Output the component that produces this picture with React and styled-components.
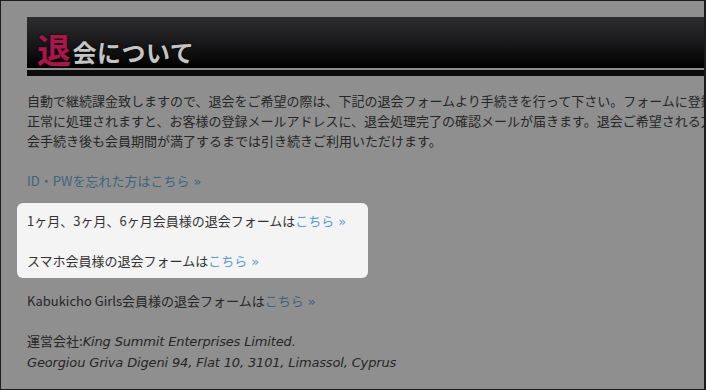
import React from "react"
import styled, { createGlobalStyle } from "styled-components"

const GlobalStyle = createGlobalStyle`
  html, body {
    margin: 0;
    padding: 0;
    overflow: hidden;
    background: #8f8f8f;
  }
`

const Frame = styled.div`
  width: 706px;
  height: 390px;
  box-sizing: border-box;
  border: 1px solid #1c1c1c;
  border-right-width: 2px;
  background: #8f8f8f;
  overflow: hidden;
  padding: 16px 0 0 26px;
  font-family: "Noto Sans CJK JP", sans-serif;
  font-size: 13px;
  line-height: 20px;
  color: #262626;
`

const Header = styled.div`
  border-bottom: 6px solid #0c0c0c;
  padding-bottom: 2px;
  background-clip: content-box;
`

const TitleBar = styled.h1`
  margin: 0;
  height: 51px;
  box-sizing: border-box;
  display: flex;
  align-items: flex-end;
  padding: 0 0 4px 10px;
  background: linear-gradient(#2e2e31, #1b1b1d 45%, #000);
  font-family: "Noto Sans CJK JP", sans-serif;
  font-weight: 700;
  line-height: 1;
  color: #c4c4c4;
  font-size: 24px;
  letter-spacing: 0.5px;
  text-shadow: 0 0 2px #000;
`

const Accent = styled.span`
  color: #a8164c;
  font-size: 34px;
  margin-right: 1px;
  margin-bottom: -2px;
`

const Body = styled.div`
  display: flex;
  flex-direction: column;
  margin-top: 15px;
`

const Para = styled.p`
  margin: 0 0 ${(p) => p.$gap ?? 20}px;
  white-space: nowrap;
`

const Link = styled.a`
  color: ${(p) => (p.$lit ? "#5d9bcd" : "#3f637d")};
  text-decoration: none;
`

const Chevron = styled.span`
  font-family: "DejaVu Sans", sans-serif;
  line-height: 0;
  margin-left: 4px;
`

const Spotlight = styled.div`
  width: 351px;
  box-sizing: border-box;
  margin: -8px 0 13px -10px;
  padding: 8px 10px 7px;
  background: #f4f4f4;
  border-radius: 6px;
  color: #333;
`

const Italic = styled.span`
  font-family: "DejaVu Sans", sans-serif;
  font-style: italic;
  letter-spacing: -0.15px;
`

const More = ({ children, lit }) => (
  <Link $lit={lit} href="#">
    {children}
    <Chevron>»</Chevron>
  </Link>
)

export default function App() {
  return (
    <>
      <GlobalStyle />
      <Frame>
        <Header>
          <TitleBar>
            <Accent>退</Accent>会について
          </TitleBar>
        </Header>
        <Body>
          <Para>
            自動で継続課金致しますので、退会をご希望の際は、下記の退会フォームより手続きを行って下さい。フォームに登録が
            <br />
            正常に処理されますと、お客様の登録メールアドレスに、退会処理完了の確認メールが届きます。退会ご希望される方は退
            <br />
            会手続き後も会員期間が満了するまでは引き続きご利用いただけます。
          </Para>
          <Para>
            <More>ID・PWを忘れた方はこちら</More>
          </Para>
          <Spotlight>
            <Para>
              1ヶ月、3ヶ月、6ヶ月会員様の退会フォームは<More lit>こちら</More>
            </Para>
            <Para $gap={0}>
              スマホ会員様の退会フォームは<More lit>こちら</More>
            </Para>
          </Spotlight>
          <Para>
            Kabukicho Girls会員様の退会フォームは<More>こちら</More>
          </Para>
          <Para $gap={0}>
            運営会社:<Italic>King Summit Enterprises Limited.</Italic>
            <br />
            <Italic>Georgiou Griva Digeni 94, Flat 10, 3101, Limassol, Cyprus</Italic>
          </Para>
        </Body>
      </Frame>
    </>
  )
}
